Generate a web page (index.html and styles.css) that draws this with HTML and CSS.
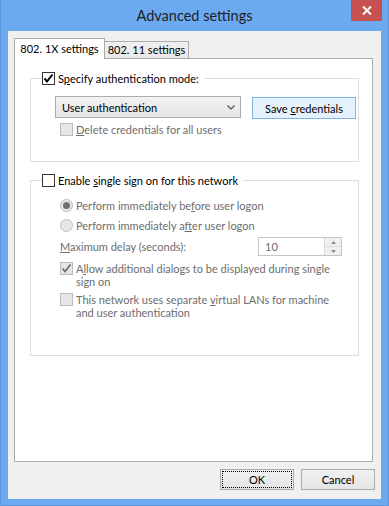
FILE: index.html
```html
<!DOCTYPE html>
<html lang="en">
<head>
  <meta charset="UTF-8">
  <title>Advanced settings</title>
  <link rel="stylesheet" href="styles.css">
</head>
<body>
  <div class="window">
    <div class="titlebar">
      <span></span>
      <div class="title">Advanced settings</div>
      <button class="close-btn" aria-label="Close">
        <svg width="10" height="9" viewBox="0 0 10 9"><path d="M1 0.5 L9 8.5 M9 0.5 L1 8.5" stroke="#fff" stroke-width="2"/></svg>
      </button>
    </div>

    <div class="client">
      <div class="tabs">
        <div class="tab active">802. 1X settings</div>
        <div class="tab">802. 11 settings</div>
      </div>

      <div class="panel">
        <fieldset class="group">
          <legend>
            <label class="check">
              <span class="box"><svg width="11" height="11" viewBox="0 0 11 11"><path d="M1.5 5.5 L4 8.5 L9.5 1.5" fill="none" stroke="#000" stroke-width="2"/></svg></span>
              <span>S<u>p</u>ecify authentication mode:</span>
            </label>
          </legend>
          <div class="group-body auth-body">
            <div class="auth-row">
              <div class="select">
                <span>User authentication</span>
                <svg width="8" height="5" viewBox="0 0 8 5"><path d="M0.5 0.5 L4 4 L7.5 0.5" fill="none" stroke="#606060" stroke-width="1.4"/></svg>
              </div>
              <button class="btn btn-save">Save <u>c</u>redentials</button>
            </div>
            <label class="check disabled delete-row">
              <span class="box"></span>
              <span><u>D</u>elete credentials for all users</span>
            </label>
          </div>
        </fieldset>

        <fieldset class="group group-sso">
          <legend>
            <label class="check">
              <span class="box"></span>
              <span>Enable <u>s</u>ingle sign on for this network</span>
            </label>
          </legend>
          <div class="group-body sso-body">
            <label class="radio disabled">
              <span class="dot on"></span>
              <span>Perform immediately be<u>f</u>ore user logon</span>
            </label>
            <label class="radio disabled">
              <span class="dot"></span>
              <span>Perform immediately a<u>f</u>ter user logon</span>
            </label>
            <div class="delay-row disabled">
              <span><u>M</u>aximum delay (seconds):</span>
              <div class="spin">
                <span class="spin-value">10</span>
                <div class="spin-btns">
                  <svg width="5" height="3" viewBox="0 0 5 3"><path d="M0 3 L2.5 0 L5 3 Z" fill="#8a8a8a"/></svg>
                  <span class="spin-sep"></span>
                  <svg width="5" height="3" viewBox="0 0 5 3"><path d="M0 0 L2.5 3 L5 0 Z" fill="#8a8a8a"/></svg>
                </div>
              </div>
            </div>
            <label class="check disabled multi">
              <span class="box"><svg width="11" height="11" viewBox="0 0 11 11"><path d="M1.5 5.5 L4 8.5 L9.5 1.5" fill="none" stroke="#707070" stroke-width="1.8"/></svg></span>
              <span>A<u>l</u>low additional dialogs to be displayed during single<br>sign on</span>
            </label>
            <label class="check disabled multi">
              <span class="box"></span>
              <span>This network uses separate <u>v</u>irtual LANs for machine<br>and user authentication</span>
            </label>
          </div>
        </fieldset>
      </div>

      <div class="actions">
        <button class="btn btn-ok">OK</button>
        <button class="btn">Cancel</button>
      </div>
    </div>
  </div>
</body>
</html>
```

FILE: styles.css
```css
body {
  margin: 0;
  font-family: Lato, "Noto Sans", sans-serif;
  font-size: 11px;
  color: #000;
  background-color: #6ba9f1;
}

.window {
  width: 389px;
  height: 506px;
  box-sizing: border-box;
  background-color: #6ba9f1;
  border: 1px solid #5b95da;
  border-top: none;
  display: flex;
  flex-direction: column;
}

.titlebar {
  height: 31px;
  display: grid;
  grid-template-columns: 1fr auto 1fr;
  align-items: start;
}

.title {
  font-size: 14.5px;
  line-height: 31px;
  color: #1e1e1e;
}

.close-btn {
  justify-self: end;
  margin-right: 6px;
  width: 31px;
  height: 21px;
  border: none;
  padding: 0;
  background-color: #c75050;
  display: flex;
  align-items: center;
  justify-content: center;
}

.client {
  flex: 1;
  margin: 0 7px 6px 7px;
  background-color: #f0f0f0;
  padding: 7px 8px 9px 6px;
  display: flex;
  flex-direction: column;
}

.tabs {
  display: flex;
  align-items: flex-end;
}

.tab {
  width: 84px;
  height: 17px;
  line-height: 16px;
  text-align: center;
  border: 1px solid #acacac;
  border-bottom: none;
  border-left: none;
  background: linear-gradient(#f0f0f0, #e9e9e9);
  box-sizing: border-box;
}

.tab.active {
  width: 91px;
  height: 21px;
  line-height: 19px;
  border-left: 1px solid #acacac;
  background: #fff;
  margin-bottom: -1px;
  position: relative;
  z-index: 1;
}

.panel {
  flex: 1;
  background-color: #fff;
  border: 1px solid #acacac;
  padding: 12px 13px 0 15px;
}

.group {
  border: 1px solid #dcdcdc;
  margin: 0;
  padding: 0;
  min-width: 0;
}

.group legend {
  padding: 0 5px 0 0;
  margin-left: 11px;
}

.group-sso {
  margin-top: 11px;
}

.auth-body {
  padding: 10px 0 24px 24px;
}

.sso-body {
  padding: 5px 16px 36px 29px;
}

.check,
.radio {
  display: flex;
  align-items: center;
  gap: 3px;
  line-height: 15px;
  white-space: nowrap;
}

.box {
  width: 13px;
  height: 13px;
  box-sizing: border-box;
  border: 1px solid #333;
  background-color: #fff;
  display: flex;
  align-items: center;
  justify-content: center;
  flex-shrink: 0;
}

.disabled {
  color: #6d6d6d;
}

.disabled .box {
  border-color: #bcbcbc;
  background-color: #e6e6e6;
}

.multi {
  align-items: flex-start;
  line-height: 13px;
  margin-top: 6px;
}

.multi + .multi {
  margin-top: 5px;
}

.auth-row {
  display: flex;
  gap: 11px;
}

.select {
  width: 186px;
  height: 22px;
  box-sizing: border-box;
  border: 1px solid #acacac;
  background: linear-gradient(#f2f2f2, #e5e5e5);
  display: flex;
  align-items: center;
  justify-content: space-between;
  padding: 0 5px 0 6px;
}

.btn {
  font: inherit;
  color: #000;
  height: 22px;
  box-sizing: border-box;
  border: 1px solid #acacac;
  background: linear-gradient(#f0f0f0, #e5e5e5);
  padding: 0;
}

.btn-save {
  width: 104px;
  border-color: #7eb4ea;
  background: #e5f1fb;
  margin-top: 1px;
}

.delete-row {
  margin: 3px 0 0 5px;
}

.radio {
  margin-top: 5px;
}

.dot {
  width: 13px;
  height: 13px;
  box-sizing: border-box;
  border-radius: 50%;
  border: 1px solid #bcbcbc;
  background-color: #e6e6e6;
  display: flex;
  align-items: center;
  justify-content: center;
}

.dot.on::after {
  content: "";
  width: 7px;
  height: 7px;
  border-radius: 50%;
  background-color: #707070;
}

.delay-row {
  display: flex;
  align-items: center;
  justify-content: space-between;
  margin-top: 4px;
}

.spin {
  width: 84px;
  height: 19px;
  box-sizing: border-box;
  border: 1px solid #c5c5c5;
  background-color: #fff;
  display: flex;
  align-items: stretch;
}

.spin-value {
  flex: 1;
  padding-left: 6px;
  line-height: 17px;
}

.spin-btns {
  width: 16px;
  border-left: 1px solid #dcdcdc;
  background-color: #f0f0f0;
  display: flex;
  flex-direction: column;
  align-items: center;
  justify-content: space-evenly;
}

.spin-sep {
  width: 100%;
  height: 1px;
  background-color: #dcdcdc;
}

.actions {
  display: flex;
  justify-content: flex-end;
  gap: 7px;
  margin: 7px -2px 0 0;
}

.actions .btn {
  width: 74px;
  height: 21px;
}

.btn-ok {
  outline: 1px dotted #000;
  outline-offset: -3px;
}
```
